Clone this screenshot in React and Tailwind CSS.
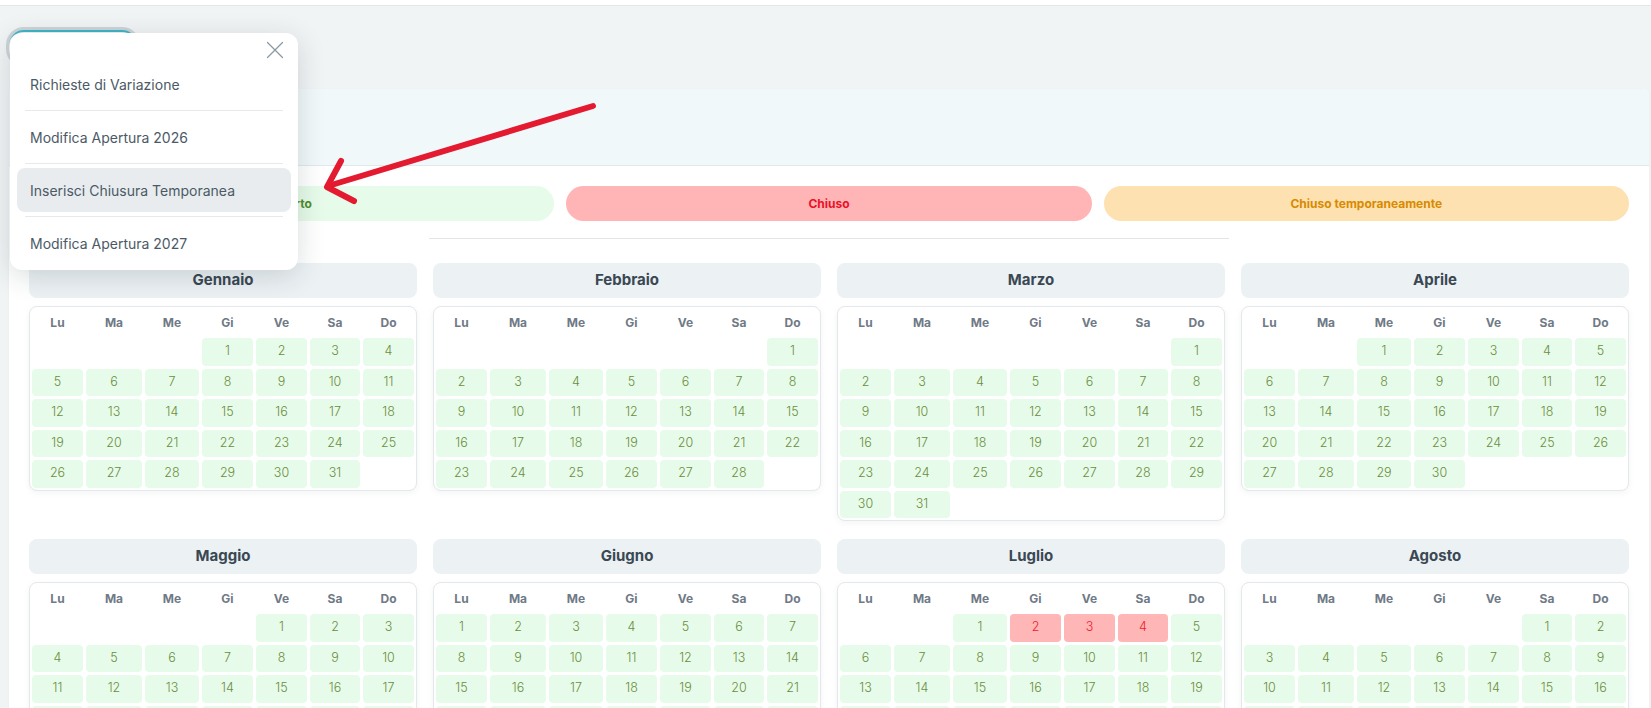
import React from "react";
import { X } from "lucide-react";

const MONTHS = [
  "Gennaio", "Febbraio", "Marzo", "Aprile", "Maggio", "Giugno",
  "Luglio", "Agosto", "Settembre", "Ottobre", "Novembre", "Dicembre",
];
const WEEKDAYS = ["Lu", "Ma", "Me", "Gi", "Ve", "Sa", "Do"];
const YEAR = 2026;

// giorni chiusi per mese (indice 0 = gennaio)
const CLOSED = { 6: [2, 3, 4] };

const MENU = [
  "Richieste di Variazione",
  "Modifica Apertura 2026",
  "Inserisci Chiusura Temporanea",
  "Modifica Apertura 2027",
];

const MonthCalendar = ({ month }) => {
  const first = new Date(YEAR, month, 1).getDay();
  const offset = (first + 6) % 7;
  const total = new Date(YEAR, month + 1, 0).getDate();
  const closed = CLOSED[month] || [];
  const cells = [];
  for (let i = 0; i < offset; i++) cells.push(null);
  for (let d = 1; d <= total; d++) cells.push(d);

  return (
    <div>
      <div className="h-[35px] rounded-lg bg-[#ecf1f4] flex items-center justify-center text-[15px] font-bold text-[#3a4853]">
        {MONTHS[month]}
      </div>
      <div className="mt-[8px] bg-white border border-[#e3e8ec] rounded-lg shadow-[0_2px_6px_rgba(15,30,40,0.05)] px-[2px] pb-[2px]">
        <div className="grid grid-cols-[51fr_56fr_54fr_51fr_51fr_50fr_51fr] gap-x-[3px] h-[31px] items-center">
          {WEEKDAYS.map((w) => (
            <div key={w} className="text-center text-[12px] font-bold text-[#6f7a86]">
              {w}
            </div>
          ))}
        </div>
        <div className="grid grid-cols-[51fr_56fr_54fr_51fr_51fr_50fr_51fr] gap-[3px]">
          {cells.map((d, i) =>
            d === null ? (
              <div key={i} className="h-[27.5px]" />
            ) : closed.includes(d) ? (
              <div key={i} className="h-[27.5px] rounded-[4px] bg-[#ffb6b6] flex items-center justify-center text-[12.5px] font-light text-[#ef1a2d]">
                {d}
              </div>
            ) : (
              <div key={i} className="h-[27.5px] rounded-[4px] bg-[#e7fbea] flex items-center justify-center text-[12.5px] font-light text-[#6a8d3a]">
                {d}
              </div>
            )
          )}
        </div>
      </div>
    </div>
  );
};

const App = () => {
  return (
    <div className="relative min-h-screen bg-[#f1f4f5] font-['Inter',sans-serif]">
      <div className="h-[6px] bg-white border-b border-[#e2e7ea]" />

      <div className="pl-[6px] pt-[21px]">
        <div className="w-[134px] h-[40px] rounded-[18px] bg-[#cdd4d7] p-[3px]">
          <div className="h-full rounded-[15px] bg-[#eef2f3] border-t-2 border-[#3fb5c8]" />
        </div>
      </div>

      <div className="ml-[9px] mr-[2px] mt-[22px] bg-white rounded-t-md shadow-[0_1px_3px_rgba(0,0,0,0.04)]">
        <div className="h-[77px] bg-[#f1f8fa] border-b border-[#dfe9ed] rounded-t-md" />

        <div className="px-[20px] pt-[20px] pb-[24px]">
          <div className="grid grid-cols-3 gap-[12px]">
            <div className="h-[35px] rounded-full bg-[#e6fbe9] flex items-center justify-center text-[12px] font-bold text-[#4f8c2b]">
              Aperto
            </div>
            <div className="h-[35px] rounded-full bg-[#ffb5b5] flex items-center justify-center text-[12px] font-bold text-[#ec1028]">
              Chiuso
            </div>
            <div className="h-[35px] rounded-full bg-[#fde1b0] flex items-center justify-center text-[12px] font-bold text-[#d88a00]">
              Chiuso temporaneamente
            </div>
          </div>

          <div className="w-1/2 mx-auto h-px bg-[#e2e6e9] mt-[17px]" />

          <div className="mt-[24px] grid grid-cols-4 gap-x-[16px] gap-y-[18px]">
            {MONTHS.map((_, m) => (
              <MonthCalendar key={m} month={m} />
            ))}
          </div>
        </div>
      </div>

      {/* menu azioni aperto */}
      <div className="absolute left-[10px] top-[33px] w-[288px] bg-white rounded-xl shadow-[0_6px_28px_rgba(20,35,45,0.16)] pt-[29px] pb-[5px] px-[7px]">
        <button className="absolute top-[2px] right-[8px] text-[#8a99a4]">
          <X size={30} strokeWidth={1} />
        </button>
        {MENU.map((label, i) => (
          <div key={label}>
            {i > 0 && <div className="mx-[8px] my-[4px] h-px bg-[#e6eaed]" />}
            <div
              className={
                i === 2
                  ? "h-[44px] rounded-lg bg-[#e8ecef] flex items-center px-[13px] text-[14px] text-[#4b5a66]"
                  : "h-[44px] rounded-lg flex items-center px-[13px] text-[14px] text-[#4b5a66]"
              }
            >
              {label}
            </div>
          </div>
        ))}
      </div>

      {/* freccia rossa */}
      <svg className="absolute left-0 top-0 pointer-events-none" width="1651" height="708">
        <g stroke="#e41a31" strokeWidth="6" strokeLinecap="round" strokeLinejoin="round" fill="none">
          <line x1="593" y1="106" x2="328" y2="186" />
          <polyline points="341,161 327,187 354,201" />
        </g>
      </svg>
    </div>
  );
};

export default App;
